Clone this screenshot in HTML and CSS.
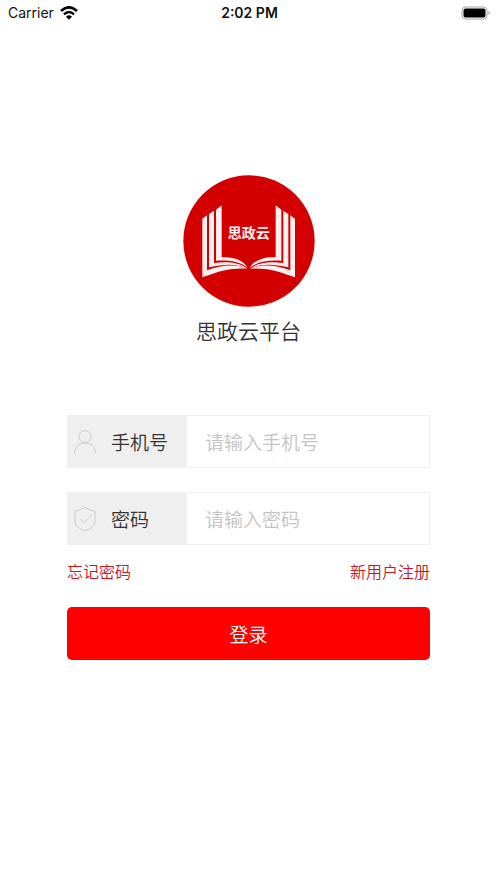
FILE: index.html
```html
<!DOCTYPE html>
<html lang="zh-CN">
<head>
<meta charset="utf-8">
<meta name="viewport" content="width=device-width, initial-scale=1">
<title>思政云平台</title>
<link rel="stylesheet" href="styles.css">
</head>
<body>
<header class="status">
  <div class="carrier">
    <span>Carrier</span>
    <svg class="wifi" viewBox="0 0 54 42" aria-hidden="true">
      <path d="M3 15Q27 -7 51 15" fill="none" stroke="#000" stroke-width="8"/>
      <path d="M12 25Q27 11 42 25" fill="none" stroke="#000" stroke-width="7"/>
      <path d="M18 32Q27 24 36 32L27 41Z"/>
    </svg>
  </div>
  <span class="time">2:02 PM</span>
  <svg class="battery" viewBox="0 0 30 14" aria-hidden="true">
    <rect x="1" y="1" width="25" height="12" rx="3.5" fill="none" stroke="#a3a3a3"/>
    <rect x="2.500" y="2.500" width="22" height="9" rx="2" fill="#000"/>
    <path d="M27.500 5Q30.500 7 27.500 9Z" fill="#a3a3a3"/>
  </svg>
</header>
<main class="login">
  <svg class="logo" viewBox="15 16 396 396" role="img" aria-label="思政云">
    <circle cx="213" cy="214" r="197" fill="#d20001"/>
    <g fill="#fff0f0">
      <g id="page-left">
        <path d="M114 120L131 107V263C164 260 194 270 209 294C184 275 153 271 114 273Z"/>
        <path d="M93 133L108 123V280C150 275 182 278 207 296C176 283 141 282 93 293Z"/>
        <path d="M73 147L87 137V302C130 286 172 282 209 297C166 293 124 303 73 323Z"/>
      </g>
      <use href="#page-left" transform="matrix(-1 0 0 1 424 0)"/>
      <text class="logo-text" x="212" y="206" text-anchor="middle">思政云</text>
    </g>
  </svg>
  <h1 class="title">思政云平台</h1>
  <form class="form">
    <div class="field">
      <label class="label" for="phone">
        <svg class="icon" viewBox="0 0 66 72" aria-hidden="true">
          <circle cx="33" cy="20" r="18"/>
          <path d="M2 70C2 50 14 39 33 39S64 50 64 70"/>
        </svg>
        <span>手机号</span>
      </label>
      <input class="input" id="phone" type="tel" placeholder="请输入手机号">
    </div>
    <div class="field">
      <label class="label" for="password">
        <svg class="icon" viewBox="0 0 66 72" aria-hidden="true">
          <path d="M33 1Q46 9 63 13V47Q62 55 55 60Q45 68 33 72Q21 68 11 60Q4 55 3 47V13Q20 9 33 1Z"/>
          <path d="M19 37L30 47L53 24"/>
        </svg>
        <span>密码</span>
      </label>
      <input class="input" id="password" type="password" placeholder="请输入密码">
    </div>
    <nav class="links">
      <a href="#forgot">忘记密码</a>
      <a href="#register">新用户注册</a>
    </nav>
    <button class="submit" type="submit">登录</button>
  </form>
</main>
</body>
</html>
```
FILE: styles.css
```css
* {
  box-sizing: border-box;
}

body {
  margin: 0;
  background: #fff;
  color: #333;
  font-family: "Noto Sans CJK SC", sans-serif;
  font-weight: 350;
}

.status {
  display: grid;
  grid-template-columns: 1fr auto 1fr;
  align-items: center;
  height: 26px;
  padding: 0 6px 0 8px;
  color: #111;
  font: 14px/26px Inter, sans-serif;
}

.carrier {
  display: flex;
  align-items: center;
  gap: 6px;
}

.wifi {
  width: 18px;
  height: 14px;
}

.time {
  font-weight: 600;
}

.battery {
  justify-self: end;
  width: 30px;
  height: 14px;
}

.login {
  display: flex;
  flex-direction: column;
  align-items: center;
  padding: 149px 67px 0;
}

.logo {
  width: 132px;
  height: 132px;
}

.logo-text {
  font-size: 42px;
  font-weight: 700;
}

.title {
  margin: 7px 0 0;
  font-size: 21px;
  font-weight: 350;
  line-height: 32px;
}

.form {
  width: 100%;
  margin-top: 69px;
}

.field {
  display: flex;
  height: 53px;
  margin-bottom: 24px;
  border: 1px solid #f0f0f0;
}

.label {
  display: flex;
  align-items: center;
  gap: 15px;
  width: 119px;
  padding-left: 6px;
  background: #efefef;
  font-size: 19px;
}

.icon {
  width: 22px;
  height: 24px;
  overflow: visible;
  fill: none;
  stroke: #cbcbcb;
  stroke-width: 3;
}

.input {
  flex: 1;
  min-width: 0;
  padding: 0 18px;
  border: 0;
  outline: 0;
  background: #fff;
  color: #333;
  font: inherit;
  font-size: 19px;
}

.input::placeholder {
  color: #c4c4c4;
}

.links {
  display: flex;
  justify-content: space-between;
  margin-top: -10px;
  font-size: 16px;
  line-height: 24px;
}

.links a {
  color: #c8161d;
  text-decoration: none;
}

.submit {
  width: 100%;
  height: 53px;
  margin-top: 24px;
  padding: 0;
  border: 0;
  border-radius: 5px;
  background: #f00;
  color: #fff;
  font: inherit;
  font-size: 19px;
}
```
